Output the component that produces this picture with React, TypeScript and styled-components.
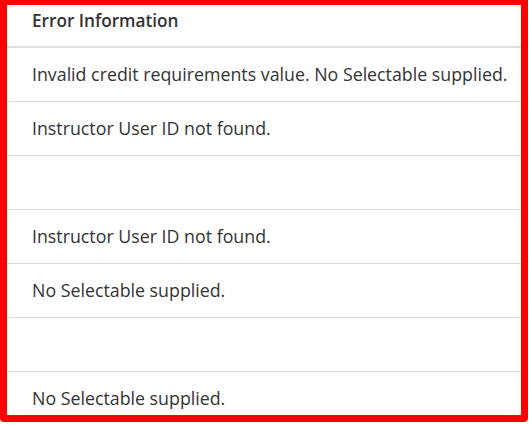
import React from "react";
import styled, { createGlobalStyle } from "styled-components";

const Global = createGlobalStyle`
  html, body { margin: 0; padding: 0; background: #ffffff; }
  body { font-family: "Open Sans", "Liberation Sans", sans-serif; }
`;

const Frame = styled.div`
  box-sizing: border-box;
  width: 528px;
  height: 422px;
  border: 7px solid #ff0000;
  border-top-width: 5px;
  border-radius: 0 0 4px 4px;
  overflow: hidden;
  background: #ffffff;
`;

const Table = styled.table`
  width: 100%;
  border-collapse: collapse;
  color: #333333;
  font-size: 17.8px;
`;

const HeadCell = styled.th`
  text-align: left;
  font-weight: 600;
  font-size: 17.2px;
  height: 42px;
  padding: 0 0 9px 25px;
  box-sizing: border-box;
  border-bottom: 2px solid #dddddd;
  line-height: 24px;
  vertical-align: middle;
`;

const Cell = styled.td`
  height: 54px;
  box-sizing: border-box;
  padding: 0 0 0 25px;
  border-bottom: 1px solid #dddddd;
  line-height: 24px;
  vertical-align: middle;
`;

const rows = [
  "Invalid credit requirements value. No Selectable supplied.",
  "Instructor User ID not found.",
  "",
  "Instructor User ID not found.",
  "No Selectable supplied.",
  "",
  "No Selectable supplied.",
];

export default function App() {
  return (
    <>
      <Global />
      <Frame>
        <Table>
          <thead>
            <tr>
              <HeadCell>Error Information</HeadCell>
            </tr>
          </thead>
          <tbody>
            {rows.map((r, i) => (
              <tr key={i}>
                <Cell>{r}</Cell>
              </tr>
            ))}
          </tbody>
        </Table>
      </Frame>
    </>
  );
}
